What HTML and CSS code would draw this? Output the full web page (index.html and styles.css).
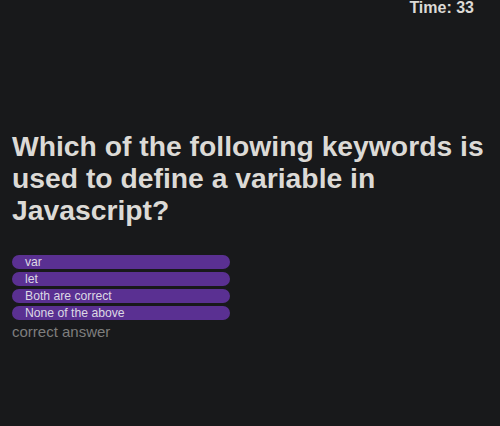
FILE: index.html
```html
<!DOCTYPE html>
<html>
<head>
<meta charset="utf-8">
<link rel="stylesheet" href="styles.css">
</head>
<body>
<div class="app">
  <header class="topbar"><span class="timer">Time: 33</span></header>
  <main class="quiz">
    <h1 class="question">Which of the following keywords is used to define a variable in Javascript?</h1>
    <div class="options">
      <button class="option">var</button>
      <button class="option">let</button>
      <button class="option">Both are correct</button>
      <button class="option">None of the above</button>
    </div>
    <p class="feedback">correct answer</p>
  </main>
</div>
</body>
</html>
```
FILE: styles.css
```css
html, body {
  margin: 0;
  padding: 0;
  background: #18191b;
  height: 100%;
}
body {
  font-family: "Liberation Sans", Arial, sans-serif;
  color: #dcdad6;
}
.app {
  padding: 0 12px;
}
.topbar {
  display: flex;
  justify-content: flex-end;
  padding-right: 14px;
  height: 16px;
}
.timer {
  font-weight: bold;
  font-size: 16px;
  line-height: 16px;
}
.quiz {
  padding-top: 114px;
}
.question {
  margin: 0;
  font-size: 28.3px;
  line-height: 32px;
  font-weight: bold;
  color: #dcdad6;
}
.options {
  margin-top: 29px;
  display: flex;
  flex-direction: column;
  gap: 3px;
  width: 218px;
}
.option {
  display: block;
  width: 100%;
  height: 14px;
  padding: 0 0 0 13px;
  border: none;
  border-radius: 8px;
  background: #5a3092;
  color: #dcd8e4;
  font-family: "Liberation Sans", Arial, sans-serif;
  font-size: 12.2px;
  line-height: 14px;
  text-align: left;
}
.feedback {
  margin: 3px 0 0;
  font-size: 15px;
  line-height: 18px;
  color: #7e7e7e;
}
```
